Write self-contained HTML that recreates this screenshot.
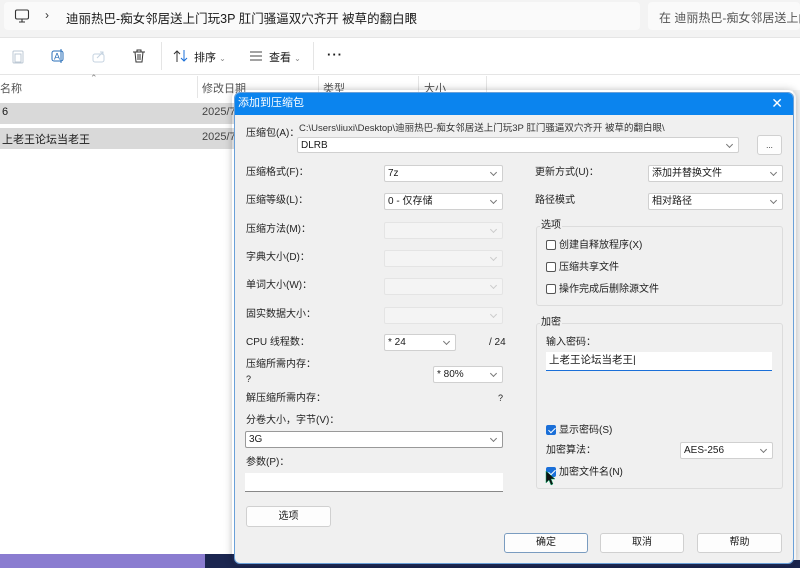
<!DOCTYPE html>
<html><head><meta charset="utf-8"><style>
*{margin:0;padding:0;box-sizing:border-box}
body{width:800px;height:568px;overflow:hidden;position:relative;background:#fff;font-family:"Liberation Sans","Noto Sans CJK SC",sans-serif;color:#1a1a1a}
.a{position:absolute;white-space:nowrap}
.l{position:absolute;font-size:10px;color:#222;white-space:nowrap;line-height:15px}
.cb{position:absolute;background:#fff;border:1px solid #d0d0d0;border-radius:2px;font-size:10px;padding:1px 3px;line-height:13px}
.cb::after{content:"";position:absolute;right:6px;top:4px;width:4px;height:4px;border-right:1px solid #777;border-bottom:1px solid #777;transform:rotate(45deg)}
.cb.d{background:#f4f4f4;border-color:#e4e4e4}
.cb.d::after{border-color:#ccc}
.btn{position:absolute;background:#fdfdfd;border:1px solid #d0d0d0;border-radius:3px;font-size:10px;text-align:center;line-height:18px}
.chk{position:absolute;width:10px;height:10px;border:1px solid #555;border-radius:2px;background:#fff}
.chk.on{background:#1a6fd8;border-color:#1a6fd8}
.chk.on::after{content:"";position:absolute;left:3px;top:0px;width:3px;height:6px;border-right:1.5px solid #fff;border-bottom:1.5px solid #fff;transform:rotate(45deg)}
.grp{position:absolute;border:1px solid #dcdcdc;border-radius:3px}
</style></head><body>
<div class="a" style="left:0;top:0;width:800px;height:38px;background:#f3f3f3"></div>
<div class="a" style="left:4px;top:2px;width:636px;height:28px;background:#fafafa;border-radius:4px"></div>
<div class="a" style="left:648px;top:2px;width:152px;height:28px;background:#fafafa;border-radius:4px"></div>
<svg class="a" style="left:14px;top:8px" width="16" height="16" viewBox="0 0 16 16"><rect x="1.5" y="2" width="13" height="9" rx="1.5" fill="none" stroke="#333" stroke-width="1.1"/><path d="M5 14h6M8 11v3" stroke="#333" stroke-width="1.1"/></svg>
<div class="a" style="left:45px;top:8px;font-size:12px;color:#333">›</div>
<div class="a" style="left:66px;top:8px;font-size:12.5px;color:#1a1a1a">迪丽热巴-痴女邻居送上门玩3P 肛门骚逼双穴齐开 被草的翻白眼</div>
<div class="a" style="left:410px;top:8px;font-size:12px;color:#333">›</div>
<div class="a" style="left:659px;top:9px;font-size:12px;color:#555">在 迪丽热巴-痴女邻居送上门</div>
<div class="a" style="left:0;top:37px;width:800px;height:1px;background:#e5e5e5"></div>
<svg class="a" style="left:11px;top:49px" width="14" height="16"><rect x="2" y="2" width="10" height="12" rx="1" fill="none" stroke="#bcc8d4"/><rect x="4" y="5" width="6" height="8" fill="none" stroke="#bcc8d4"/></svg>
<svg class="a" style="left:50px;top:48px" width="16" height="16"><rect x="2" y="3" width="11" height="10" rx="2" fill="none" stroke="#2a6fb8"/><text x="4" y="11.5" font-size="9" fill="#2a6fb8" font-family="Liberation Sans">A</text><path d="M11 1v14" stroke="#2a6fb8"/></svg>
<svg class="a" style="left:91px;top:48px" width="16" height="16"><rect x="2" y="6" width="11" height="8" rx="2" fill="none" stroke="#c5d3e0"/><path d="M6 10l6-6M9 4h3v3" fill="none" stroke="#c5d3e0"/></svg>
<svg class="a" style="left:131px;top:48px" width="16" height="16"><path d="M2 4h12M6 4V2h4v2M4 4l1 10h6l1-10M7 6v6M9 6v6" fill="none" stroke="#333"/></svg>
<div class="a" style="left:161px;top:42px;width:1px;height:28px;background:#e5e5e5"></div>
<svg class="a" style="left:173px;top:49px" width="16" height="14"><path d="M4 13V2M1 5l3-3 3 3" fill="none" stroke="#333"/><path d="M11 1v11M8 9l3 3 3-3" fill="none" stroke="#1a6fd8"/></svg>
<div class="a" style="left:194px;top:49px;font-size:11px">排序 <span style="font-size:8px;color:#888">⌄</span></div>
<svg class="a" style="left:249px;top:50px" width="14" height="12"><path d="M1 2h12M1 6h12M1 10h12" stroke="#444"/></svg>
<div class="a" style="left:269px;top:49px;font-size:11px">查看 <span style="font-size:8px;color:#888">⌄</span></div>
<div class="a" style="left:313px;top:42px;width:1px;height:28px;background:#e5e5e5"></div>
<div class="a" style="left:327px;top:47px;font-size:13px;font-weight:bold;letter-spacing:1px">···</div>
<div class="a" style="left:0;top:74px;width:800px;height:1px;background:#e5e5e5"></div>
<div class="a" style="left:90px;top:73px;font-size:9px;color:#888">⌃</div>
<div class="a" style="left:0;top:80px;font-size:11px;color:#555">名称</div>
<div class="a" style="left:197px;top:76px;width:1px;height:22px;background:#e5e5e5"></div>
<div class="a" style="left:202px;top:80px;font-size:11px;color:#555">修改日期</div>
<div class="a" style="left:318px;top:76px;width:1px;height:22px;background:#e5e5e5"></div>
<div class="a" style="left:323px;top:80px;font-size:11px;color:#555">类型</div>
<div class="a" style="left:418px;top:76px;width:1px;height:22px;background:#e5e5e5"></div>
<div class="a" style="left:424px;top:80px;font-size:11px;color:#555">大小</div>
<div class="a" style="left:486px;top:76px;width:1px;height:22px;background:#e5e5e5"></div>
<div class="a" style="left:0;top:103px;width:240px;height:21px;background:#d9d9d9"></div>
<div class="a" style="left:0;top:128px;width:240px;height:21px;background:#d9d9d9"></div>
<div class="a" style="left:2px;top:106px;font-size:11px">6</div>
<div class="a" style="left:202px;top:106px;font-size:11px;color:#444">2025/7</div>
<div class="a" style="left:2px;top:131px;font-size:11px">上老王论坛当老王</div>
<div class="a" style="left:202px;top:131px;font-size:11px;color:#444">2025/7</div>
<div class="a" style="left:0;top:554px;width:230px;height:14px;background:#8a7cd0"></div>
<div class="a" style="left:205px;top:554px;width:600px;height:14px;background:#1b2650"></div>
<div class="a" style="left:793px;top:90px;width:7px;height:470px;background:#f4f4f4"></div>
<div class="a" style="left:232px;top:90px;width:564px;height:476px;border-radius:8px;box-shadow:0 0 8px rgba(0,0,0,.25)"></div>
<div class="a" style="left:234px;top:92px;width:560px;height:472px;background:#f0f0f0;border:1px solid #6aa0d8;border-radius:6px;overflow:hidden">
 <div style="height:22px;background:#0b84ee;color:#fff;font-size:11px;line-height:21px;padding-left:3px;position:relative">添加到压缩包<span style="position:absolute;right:10px;top:0;font-size:14px">✕</span></div>
</div>
<div class="l" style="left:246px;top:126px">压缩包(A)：</div>
<div class="l" style="left:299px;top:121px;font-size:9.5px;color:#333">C:\Users\liuxi\Desktop\迪丽热巴-痴女邻居送上门玩3P 肛门骚逼双穴齐开 被草的翻白眼\</div>
<div class="cb" style="left:297px;top:137px;width:442px;height:16px">DLRB</div>
<div class="btn" style="left:757px;top:135px;width:25px;height:20px;line-height:20px;font-size:8px">...</div>

<div class="l" style="left:246px;top:165px">压缩格式(F)：</div>
<div class="cb" style="left:384px;top:165px;width:119px;height:17px">7z</div>
<div class="l" style="left:246px;top:193px">压缩等级(L)：</div>
<div class="cb" style="left:384px;top:193px;width:119px;height:17px">0 - 仅存储</div>
<div class="l" style="left:246px;top:222px">压缩方法(M)：</div>
<div class="cb d" style="left:384px;top:222px;width:119px;height:17px"></div>
<div class="l" style="left:246px;top:250px">字典大小(D)：</div>
<div class="cb d" style="left:384px;top:250px;width:119px;height:17px"></div>
<div class="l" style="left:246px;top:278px">单词大小(W)：</div>
<div class="cb d" style="left:384px;top:278px;width:119px;height:17px"></div>
<div class="l" style="left:246px;top:307px">固实数据大小：</div>
<div class="cb d" style="left:384px;top:307px;width:119px;height:17px"></div>
<div class="l" style="left:246px;top:335px">CPU 线程数：</div>
<div class="cb" style="left:384px;top:334px;width:72px;height:17px">* 24</div>
<div class="l" style="left:489px;top:335px">/ 24</div>
<div class="l" style="left:246px;top:357px">压缩所需内存：</div>
<div class="l" style="left:246px;top:372px;font-size:9px">?</div>
<div class="cb" style="left:433px;top:366px;width:70px;height:17px">* 80%</div>
<div class="l" style="left:246px;top:391px">解压缩所需内存：</div>
<div class="l" style="left:498px;top:391px;font-size:9px">?</div>
<div class="l" style="left:246px;top:413px">分卷大小，字节(V)：</div>
<div class="cb" style="left:245px;top:431px;width:258px;height:17px;border-color:#999">3G</div>
<div class="l" style="left:246px;top:455px">参数(P)：</div>
<div class="a" style="left:245px;top:473px;width:258px;height:19px;background:#fff;border-bottom:1px solid #888"></div>
<div class="btn" style="left:246px;top:506px;width:85px;height:21px;line-height:20px">选项</div>

<div class="l" style="left:535px;top:165px">更新方式(U)：</div>
<div class="cb" style="left:648px;top:165px;width:135px;height:17px">添加并替换文件</div>
<div class="l" style="left:535px;top:193px">路径模式</div>
<div class="cb" style="left:648px;top:193px;width:135px;height:17px">相对路径</div>

<div class="grp" style="left:536px;top:226px;width:247px;height:80px"></div>
<div class="l" style="left:540px;top:218px;background:#f0f0f0;padding:0 1px">选项</div>
<div class="chk" style="left:546px;top:240px"></div><div class="l" style="left:559px;top:238px">创建自释放程序(X)</div>
<div class="chk" style="left:546px;top:262px"></div><div class="l" style="left:559px;top:260px">压缩共享文件</div>
<div class="chk" style="left:546px;top:284px"></div><div class="l" style="left:559px;top:282px">操作完成后删除源文件</div>

<div class="grp" style="left:536px;top:323px;width:247px;height:166px"></div>
<div class="l" style="left:540px;top:315px;background:#f0f0f0;padding:0 1px">加密</div>
<div class="l" style="left:546px;top:335px">输入密码：</div>
<div class="a" style="left:546px;top:352px;width:226px;height:19px;background:#fff;border-bottom:1.5px solid #1a6fd8;font-size:10.5px;line-height:17px;padding-left:3px">上老王论坛当老王|</div>
<div class="chk on" style="left:546px;top:425px"></div><div class="l" style="left:559px;top:423px">显示密码(S)</div>
<div class="l" style="left:546px;top:443px">加密算法：</div>
<div class="cb" style="left:680px;top:442px;width:93px;height:17px">AES-256</div>
<div class="chk on" style="left:546px;top:467px"></div><div class="l" style="left:559px;top:465px">加密文件名(N)</div>
<svg class="a" style="left:545px;top:470px" width="12" height="16"><path d="M1 1v12l3-3 2 5 2-1-2-5h4z" fill="#111" stroke="#0a6" stroke-width=".5"/></svg>

<div class="btn" style="left:504px;top:533px;width:84px;height:20px;border-color:#7a9cc0">确定</div>
<div class="btn" style="left:600px;top:533px;width:84px;height:20px">取消</div>
<div class="btn" style="left:697px;top:533px;width:85px;height:20px">帮助</div>
</body></html>
